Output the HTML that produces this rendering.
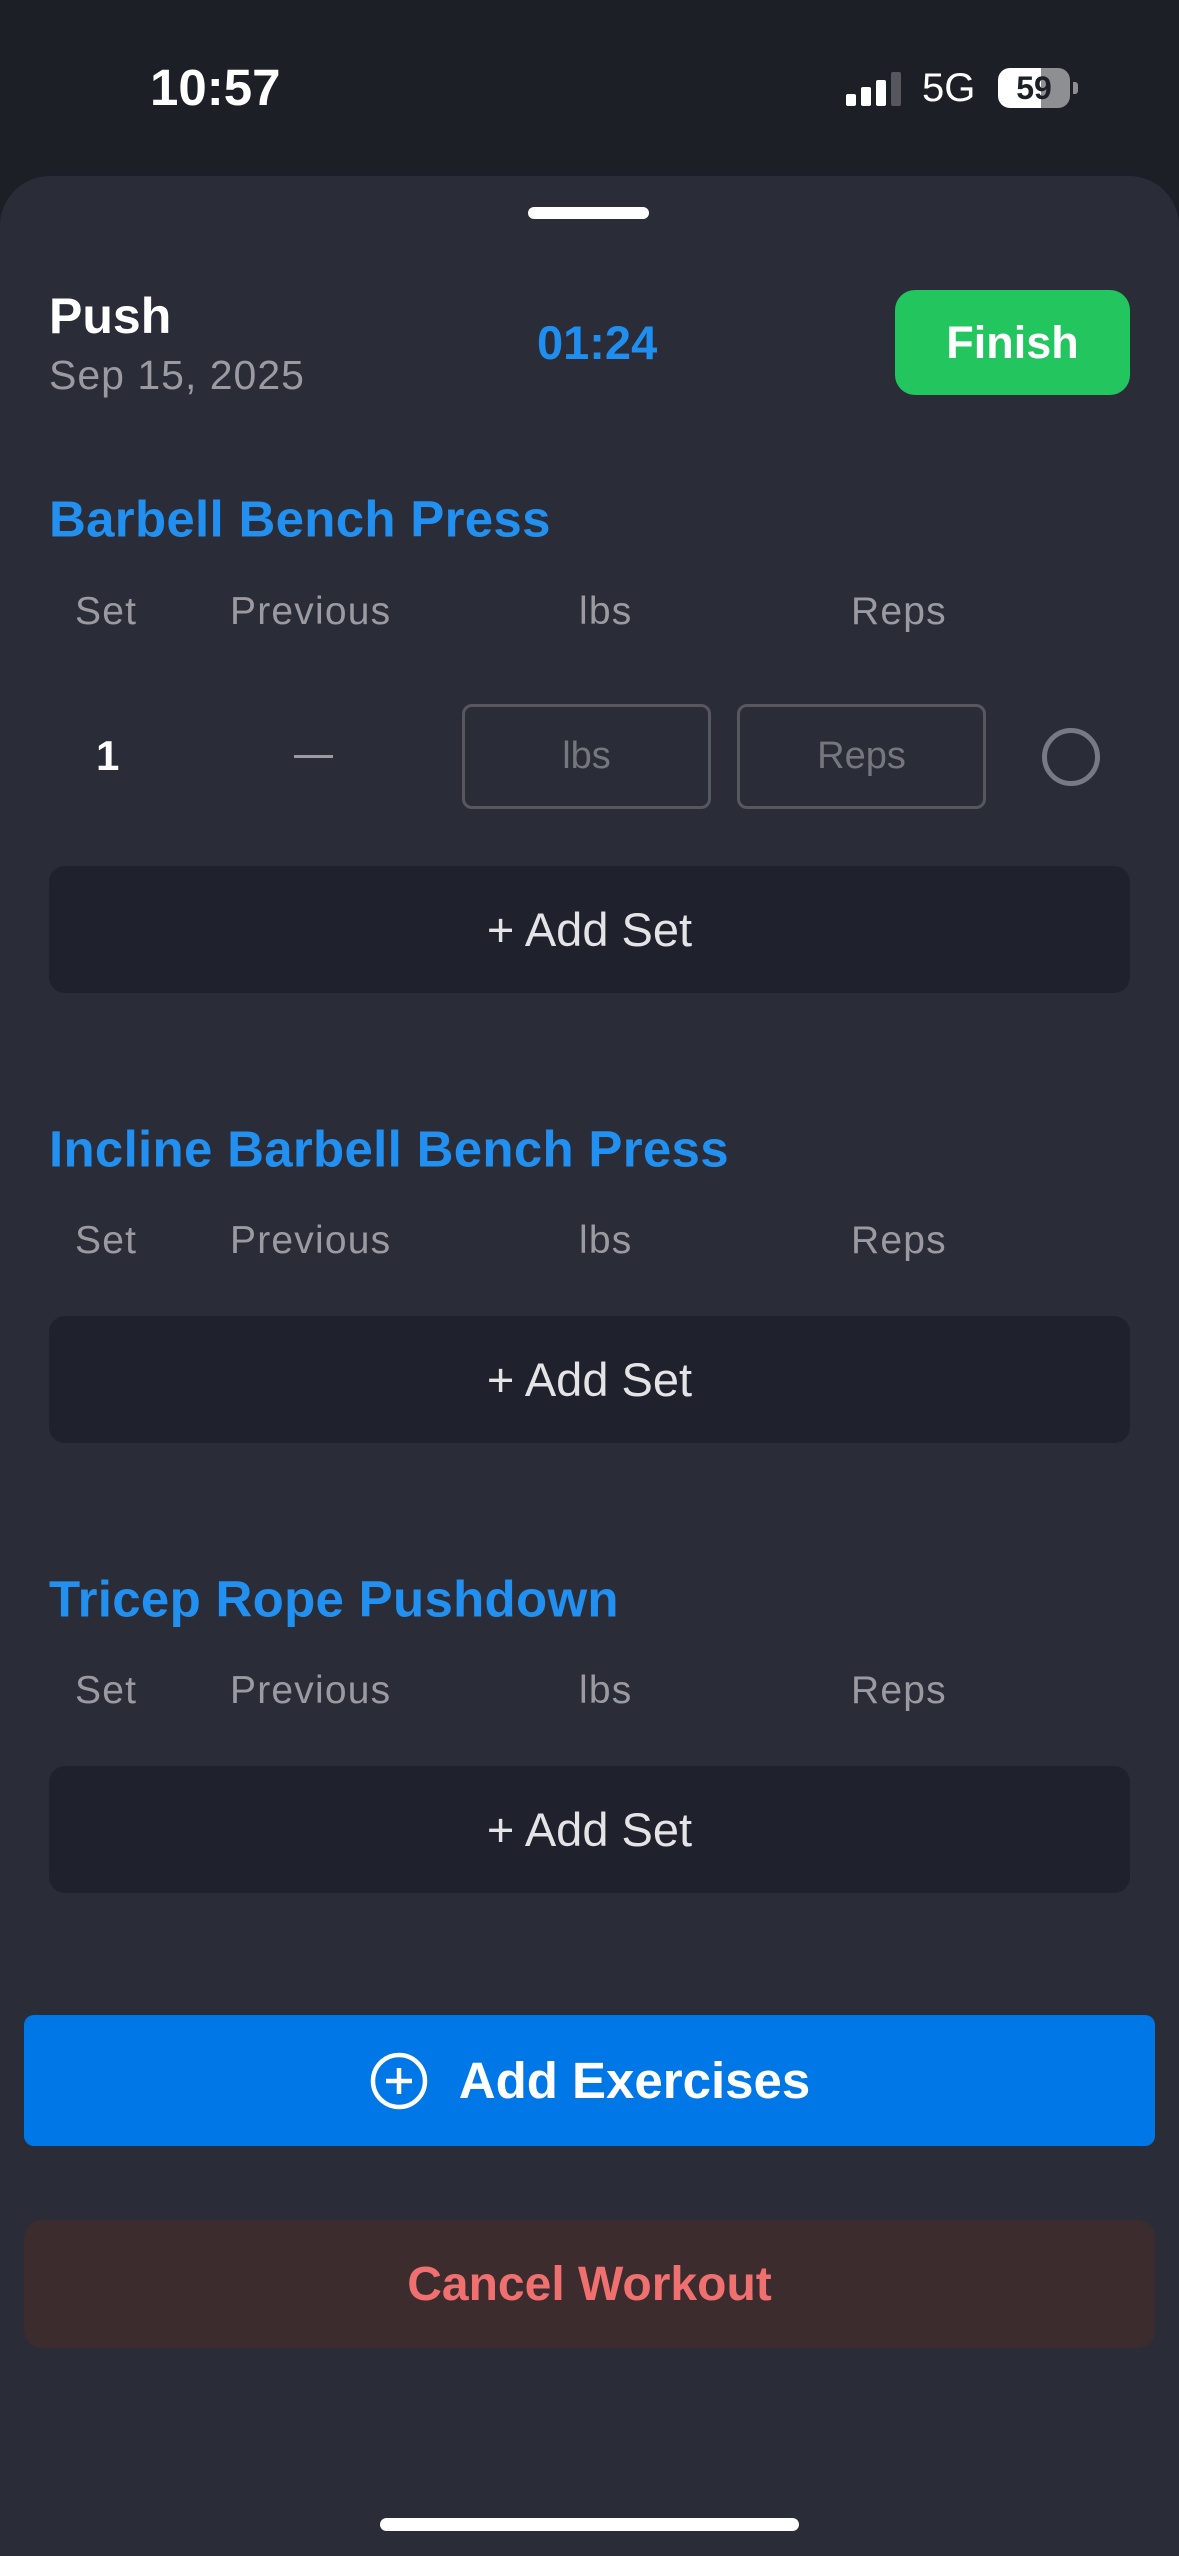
<!DOCTYPE html>
<html><head><meta charset="utf-8"><style>
*{margin:0;padding:0;box-sizing:border-box}
body{width:1179px;height:2556px;background:#1d1f27;font-family:"Liberation Sans",sans-serif;position:relative;overflow:hidden}
.a{position:absolute}
.sheet{position:absolute;left:0;top:176px;width:1179px;height:2380px;background:#2a2d38;border-radius:50px 50px 0 0}
.hdr{position:absolute;font-size:39px;letter-spacing:1.2px;color:#9a9aa0;transform:translateY(-50%)}
.title{position:absolute;left:49px;font-size:51px;letter-spacing:0.3px;font-weight:bold;color:#2190f0;transform:translateY(-50%)}
.add{position:absolute;left:49px;width:1081px;height:127px;background:#1f222c;border-radius:16px;color:#e4e4e6;font-size:47px;display:flex;align-items:center;justify-content:center}
.inp{position:absolute;top:704px;height:105px;border:3px solid #56585e;border-radius:10px;color:#75777c;font-size:38px;display:flex;align-items:center;justify-content:center}
</style></head><body>
<div class="a" style="left:150px;top:58px;font-size:51px;font-weight:bold;color:#fff">10:57</div>
<div class="a" style="left:846px;top:94px;width:10px;height:12px;background:#fff;border-radius:2px"></div>
<div class="a" style="left:861px;top:87px;width:10px;height:19px;background:#fff;border-radius:2px"></div>
<div class="a" style="left:876px;top:80px;width:10px;height:26px;background:#fff;border-radius:2px"></div>
<div class="a" style="left:891px;top:72px;width:10px;height:34px;background:#55575d;border-radius:2px"></div>
<div class="a" style="left:922px;top:66px;font-size:40px;color:#fff">5G</div>
<div class="a" style="left:998px;top:68px;width:72px;height:40px;border-radius:12px;background:linear-gradient(90deg,#fff 0 60%,#8e8f93 60%);color:#1d1f27;font-size:32px;font-weight:bold;text-align:center;line-height:40px">59</div>
<div class="a" style="left:1073px;top:82px;width:5px;height:12px;background:#8e8f93;border-radius:0 3px 3px 0"></div>
<div class="sheet"></div>
<div class="a" style="left:528px;top:207px;width:121px;height:12px;background:#fff;border-radius:6px"></div>
<div class="a" style="left:49px;top:287px;font-size:50px;font-weight:bold;color:#fff">Push</div>
<div class="a" style="left:49px;top:352px;font-size:41px;letter-spacing:1px;color:#9a9aa0">Sep 15, 2025</div>
<div class="a" style="left:537px;top:315px;font-size:47px;font-weight:bold;color:#1e8ff0">01:24</div>
<div class="a" style="left:895px;top:290px;width:235px;height:105px;background:#22c55e;border-radius:20px;color:#fff;font-size:45px;font-weight:bold;display:flex;align-items:center;justify-content:center">Finish</div>

<div class="title" style="top:519px">Barbell Bench Press</div>
<div class="hdr" style="left:75px;top:612px">Set</div><div class="hdr" style="left:230px;top:612px">Previous</div><div class="hdr" style="left:579px;top:612px">lbs</div><div class="hdr" style="left:851px;top:612px">Reps</div>
<div class="a" style="left:96px;top:732px;font-size:42px;font-weight:bold;color:#fff">1</div>
<div class="a" style="left:294px;top:755px;width:39px;height:3px;background:#9a9aa0"></div>
<div class="inp" style="left:462px;width:249px">lbs</div>
<div class="inp" style="left:737px;width:249px">Reps</div>
<div class="a" style="left:1042px;top:728px;width:58px;height:58px;border:5px solid #777a85;border-radius:50%"></div>
<div class="add" style="top:866px">+ Add Set</div>

<div class="title" style="top:1149px">Incline Barbell Bench Press</div>
<div class="hdr" style="left:75px;top:1241px">Set</div><div class="hdr" style="left:230px;top:1241px">Previous</div><div class="hdr" style="left:579px;top:1241px">lbs</div><div class="hdr" style="left:851px;top:1241px">Reps</div>
<div class="add" style="top:1316px">+ Add Set</div>

<div class="title" style="top:1599px">Tricep Rope Pushdown</div>
<div class="hdr" style="left:75px;top:1691px">Set</div><div class="hdr" style="left:230px;top:1691px">Previous</div><div class="hdr" style="left:579px;top:1691px">lbs</div><div class="hdr" style="left:851px;top:1691px">Reps</div>
<div class="add" style="top:1766px">+ Add Set</div>

<div class="a" style="left:24px;top:2015px;width:1131px;height:131px;background:#0077e6;border-radius:10px;color:#fff;font-size:51px;font-weight:bold;display:flex;align-items:center;justify-content:center">
<svg width="60" height="60" viewBox="0 0 60 60" style="margin-right:30px"><circle cx="30" cy="30" r="26" fill="none" stroke="#fff" stroke-width="4.5"/><path d="M30 17V43M17 30H43" stroke="#fff" stroke-width="4.5"/></svg>Add Exercises</div>
<div class="a" style="left:24px;top:2220px;width:1131px;height:128px;background:#3c2c2e;border-radius:18px;color:#f07070;font-size:48px;font-weight:bold;display:flex;align-items:center;justify-content:center">Cancel Workout</div>
<div class="a" style="left:380px;top:2518px;width:419px;height:13px;background:#fff;border-radius:7px"></div>
</body></html>
